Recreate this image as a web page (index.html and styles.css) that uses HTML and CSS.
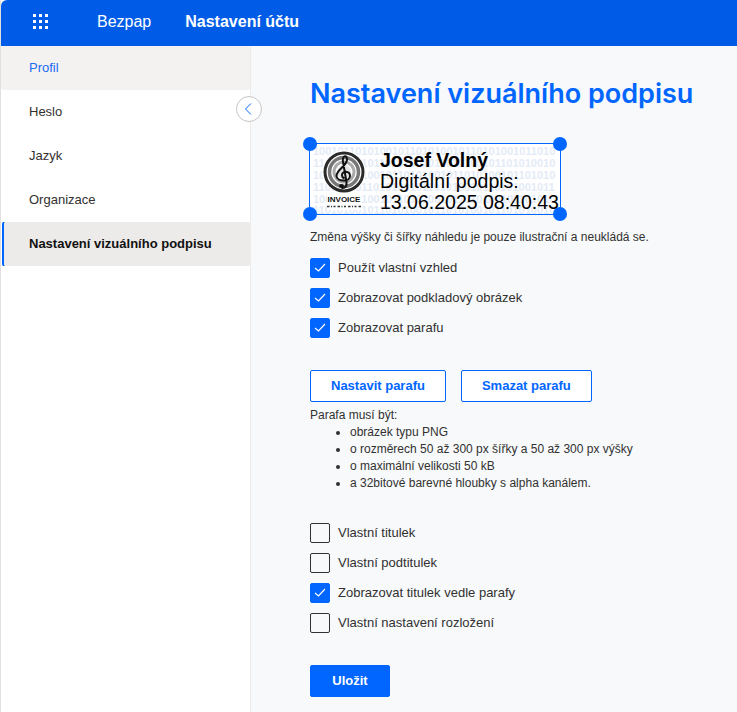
FILE: index.html
```html
<!DOCTYPE html>
<html lang="cs">
<head>
<meta charset="utf-8">
<title>Nastavení účtu</title>
<link rel="stylesheet" href="styles.css">
</head>
<body>
<div class="app">
  <header class="topbar">
    <button class="apps" type="button" aria-label="Aplikace">
      <svg width="16" height="16" viewBox="0 0 16 16" fill="currentColor">
        <path d="M0 0h3v3H0zM6 0h3v3H6zM12 0h3v3h-3zM0 6h3v3H0zM6 6h3v3H6zM12 6h3v3h-3zM0 12h3v3H0zM6 12h3v3H6zM12 12h3v3h-3z"/>
      </svg>
    </button>
    <a class="brand" href="#">Bezpap</a>
    <span class="section">Nastavení účtu</span>
  </header>
  <div class="body">
    <aside class="sidebar">
      <nav class="menu">
        <a class="item hover" href="#">Profil</a>
        <a class="item" href="#">Heslo</a>
        <a class="item" href="#">Jazyk</a>
        <a class="item" href="#">Organizace</a>
        <a class="item active" href="#" aria-current="page">Nastavení vizuálního podpisu</a>
      </nav>
      <button class="collapse" type="button" aria-label="Sbalit nabídku">
        <svg width="12" height="12" viewBox="0 0 12 12" fill="none" stroke="currentColor"><path d="M8 0.5L2.500 6L8 11.500"/></svg>
      </button>
    </aside>
    <main class="content">
      <h1>Nastavení vizuálního podpisu</h1>
      <div class="preview">
        <svg class="signature" viewBox="0 0 500 140" role="img" aria-label="Náhled podpisu">
          <g class="binary">
            <text x="6" y="22">1001011010100101101010010110101001011010</text>
            <text x="6" y="46">1101010010110101001011010100101101010010</text>
            <text x="6" y="70">1001101010010110101001011010100101101010</text>
            <text x="6" y="94">1101001011010100101101010010110101001011</text>
            <text x="6" y="118">1001101010010110101001011010100101101010</text>
            <text x="6" y="139">1101010010110101001011010100101101010010</text>
          </g>
          <g fill="none">
            <circle cx="68" cy="56" r="43" fill="#fff"/>
            <circle cx="68" cy="56" r="38" stroke="#2a2a2a" stroke-width="6"/>
            <circle cx="68" cy="56" r="29" stroke="#777" stroke-width="7"/>
            <circle cx="68" cy="56" r="20" stroke="#aaa" stroke-width="6"/>
            <circle cx="68" cy="56" r="14" fill="#e4e4e4"/>
            <ellipse cx="63" cy="84" rx="5" ry="4" fill="#111"/>
            <path d="M63 88c8 1 11-4 10-12L66 36c-2-12 8-16 8-5 0 13-21 20-21 33 1 12 27 12 27 0 0-11-17-11-16-1 0 4 3 5 5 6" stroke="#111" stroke-width="4"/>
          </g>
          <rect x="34" y="101" width="68" height="31" fill="#fff"/>
          <text class="logo-name" x="68" y="116" text-anchor="middle">INVOICE</text>
          <path d="M34 125h68" stroke="#333" stroke-width="3" stroke-dasharray="5 3 2 3 4 4"/>
          <text class="sign-name" x="140" y="46">Josef Volný</text>
          <text class="sign-text" x="140" y="88">Digitální podpis:</text>
          <text class="sign-text" x="140" y="130">13.06.2025 08:40:43</text>
        </svg>
        <span class="handle tl"></span><span class="handle tr"></span>
        <span class="handle bl"></span><span class="handle br"></span>
      </div>
      <p class="note">Změna výšky či šířky náhledu je pouze ilustrační a neukládá se.</p>
      <div class="options">
        <label class="check"><input type="checkbox" checked>Použít vlastní vzhled</label>
        <label class="check"><input type="checkbox" checked>Zobrazovat podkladový obrázek</label>
        <label class="check"><input type="checkbox" checked>Zobrazovat parafu</label>
      </div>
      <div class="actions">
        <button class="btn outline" type="button">Nastavit parafu</button>
        <button class="btn outline" type="button">Smazat parafu</button>
      </div>
      <div class="rules">
        Parafa musí být:
        <ul>
          <li>obrázek typu PNG</li>
          <li>o rozměrech 50 až 300 px šířky a 50 až 300 px výšky</li>
          <li>o maximální velikosti 50 kB</li>
          <li>a 32bitové barevné hloubky s alpha kanálem.</li>
        </ul>
      </div>
      <div class="options">
        <label class="check"><input type="checkbox">Vlastní titulek</label>
        <label class="check"><input type="checkbox">Vlastní podtitulek</label>
        <label class="check"><input type="checkbox" checked>Zobrazovat titulek vedle parafy</label>
        <label class="check"><input type="checkbox">Vlastní nastavení rozložení</label>
      </div>
      <button class="btn primary" type="submit">Uložit</button>
    </main>
  </div>
</div>
</body>
</html>
```
FILE: styles.css
```css
* { box-sizing: border-box; }
body {
  margin: 0;
  background: #fff;
  color: #323130;
  font: 13px/18px "Liberation Sans", Arial, sans-serif;
}
button { font: inherit; cursor: pointer; }
a { color: inherit; text-decoration: none; }
.app {
  display: flex;
  flex-direction: column;
  min-height: 100vh;
  border-left: 1px solid #e1e1e1;
}
.topbar {
  display: flex;
  align-items: center;
  height: 46px;
  padding: 0 32px 2px;
  border-top-left-radius: 6px;
  background: #005ce6;
  color: #fff;
  font-size: 16px;
}
.apps {
  display: flex;
  padding: 0;
  border: 0;
  background: none;
  color: inherit;
}
.brand { margin-left: 48px; }
.section { margin-left: 34px; font-weight: 600; }
.body { display: flex; flex: 1; }
.sidebar {
  position: relative;
  flex: 0 0 250px;
  border-right: 1px solid #edebe9;
}
.item {
  display: block;
  height: 44px;
  padding: 0 28px;
  border-radius: 2px;
  line-height: 44px;
}
.hover { background: #f3f2f1; color: #1a6cf0; }
.active {
  border-left: 1px solid #fff;
  padding-left: 27px;
  background: #edebe9;
  box-shadow: inset 2px 0 #0066ff;
  color: #111;
  font-weight: 600;
}
.collapse {
  position: absolute;
  top: 50px;
  right: -12px;
  display: flex;
  align-items: center;
  justify-content: center;
  width: 26px;
  height: 26px;
  padding: 0;
  border: 1px solid #c8c6c4;
  border-radius: 50%;
  background: #fff;
  color: #0066ff;
}
.content {
  flex: 1;
  padding: 28px 20px 15px 59px;
  background: #f7f9fb;
}
h1 {
  margin: 0 0 29px;
  color: #0066ff;
  font-family: Inter, "Liberation Sans", sans-serif;
  font-size: 27px;
  line-height: 40px;
  font-weight: 600;
}
.preview {
  position: relative;
  width: 252px;
  margin-left: -1px;
  border: 1px solid #0066ff;
  background: #fff;
}
.signature { display: block; width: 100%; }
.binary { fill: #e4ebf7; font: bold 22px "Liberation Sans", sans-serif; }
.logo-name { fill: #111; font: bold 16px "Liberation Sans", sans-serif; }
.sign-name { fill: #000; font: bold 39px "Liberation Sans", sans-serif; }
.sign-text { fill: #000; font: 39px "Liberation Sans", sans-serif; }
.handle {
  position: absolute;
  width: 14px;
  height: 14px;
  border-radius: 50%;
  background: #0066ff;
}
.tl { top: -7px; left: -7px; }
.tr { top: -7px; right: -7px; }
.bl { bottom: -7px; left: -7px; }
.br { bottom: -7px; right: -7px; }
.note { margin: 13px 0 12px; font-size: 12px; }
.options { display: grid; gap: 10px; }
.check {
  display: flex;
  align-items: center;
  gap: 8px;
  line-height: 20px;
}
.check input {
  appearance: none;
  width: 20px;
  height: 20px;
  margin: 0;
  border: 1px solid #323130;
  border-radius: 2px;
}
.check input:checked {
  border-color: #0066ff;
  background: #0066ff url("data:image/svg+xml,%3Csvg xmlns='http://www.w3.org/2000/svg' viewBox='0 0 18 18'%3E%3Cpath d='M4 9L7.500 12L14 5' fill='none' stroke='white' stroke-width='1.200'/%3E%3C/svg%3E") center / 18px 18px;
}
.actions { display: flex; gap: 15px; margin: 32px 0 5px; }
.btn {
  height: 32px;
  padding: 0 20px;
  border: 1px solid #0066ff;
  border-radius: 2px;
  font-weight: 600;
}
.outline { background: #fff; color: #0066ff; }
.primary {
  min-width: 80px;
  margin-top: 32px;
  background: #0066ff;
  color: #fff;
}
.rules { margin-bottom: 31px; font-size: 12px; line-height: 17px; }
.rules ul { margin: 0; padding-left: 40px; }
```
